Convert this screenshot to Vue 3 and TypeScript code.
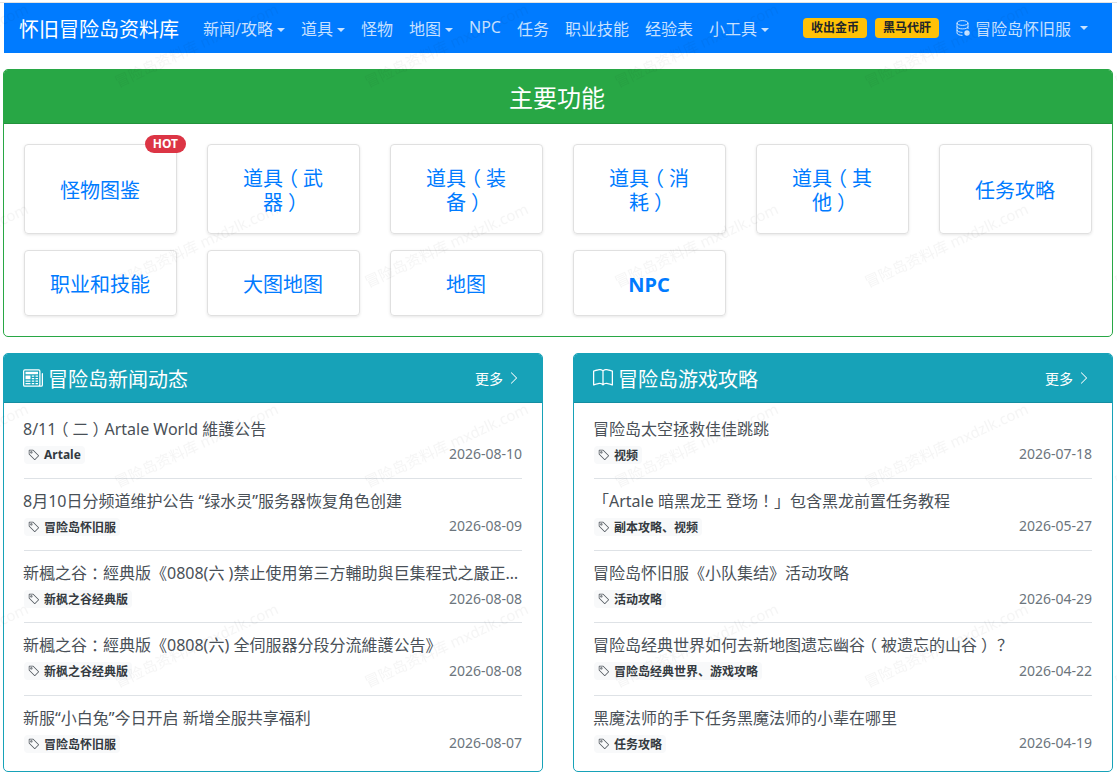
<script setup lang="ts">
type Post = { title: string; tag: string; date: string }

const navItems = [
  { label: '新闻/攻略', caret: true },
  { label: '道具', caret: true },
  { label: '怪物', caret: false },
  { label: '地图', caret: true },
  { label: 'NPC', caret: false },
  { label: '任务', caret: false },
  { label: '职业技能', caret: false },
  { label: '经验表', caret: false },
  { label: '小工具', caret: true },
]

const features = [
  { label: '怪物图鉴', hot: true, tall: true },
  { label: '道具（武器）', tall: true },
  { label: '道具（装备）', tall: true },
  { label: '道具（消耗）', tall: true },
  { label: '道具（其他）', tall: true },
  { label: '任务攻略', tall: true },
  { label: '职业和技能' },
  { label: '大图地图' },
  { label: '地图' },
  { label: 'NPC', bold: true },
]

const news: Post[] = [
  { title: '8/11（二）Artale World 維護公告', tag: 'Artale', date: '2026-08-10' },
  { title: '8月10日分频道维护公告 “绿水灵”服务器恢复角色创建', tag: '冒险岛怀旧服', date: '2026-08-09' },
  { title: '新楓之谷：經典版《0808(六 )禁止使用第三方輔助與巨集程式之嚴正聲明》', tag: '新枫之谷经典版', date: '2026-08-08' },
  { title: '新楓之谷：經典版《0808(六) 全伺服器分段分流維護公告》', tag: '新枫之谷经典版', date: '2026-08-08' },
  { title: '新服“小白兔”今日开启 新增全服共享福利', tag: '冒险岛怀旧服', date: '2026-08-07' },
]

const guides: Post[] = [
  { title: '冒险岛太空拯救佳佳跳跳', tag: '视频', date: '2026-07-18' },
  { title: '「Artale 暗黑龙王 登场！」包含黑龙前置任务教程', tag: '副本攻略、视频', date: '2026-05-27' },
  { title: '冒险岛怀旧服《小队集结》活动攻略', tag: '活动攻略', date: '2026-04-29' },
  { title: '冒险岛经典世界如何去新地图遗忘幽谷（被遗忘的山谷）？', tag: '冒险岛经典世界、游戏攻略', date: '2026-04-22' },
  { title: '黑魔法师的手下任务黑魔法师的小辈在哪里', tag: '任务攻略', date: '2026-04-19' },
]

const panels = [
  { title: '冒险岛新闻动态', icon: 'news', posts: news },
  { title: '冒险岛游戏攻略', icon: 'book', posts: guides },
]

// full-width punctuation sits left/right in the em box here, the reference centres it
function splitPunct(text: string) {
  return text.split(/([（）：！？])/).filter(Boolean).map((t) => ({
    t,
    cls: /[（）：！？]/.test(t) ? 'punct' : '',
  }))
}
</script>

<template>
  <div class="page">
    <div class="top-rule" />
    <nav class="navbar">
      <span class="brand">怀旧冒险岛资料库</span>
      <ul class="nav">
        <li v-for="n in navItems" :key="n.label" class="nav-item">
          {{ n.label }}<i v-if="n.caret" class="caret" />
        </li>
      </ul>
      <span class="pill">收出金币</span>
      <span class="pill">黑马代肝</span>
      <span class="server">
        <svg class="db" viewBox="0 0 14 16" width="14" height="16" fill="none" stroke="currentColor" stroke-width="1">
          <ellipse cx="6.500" cy="3" rx="5.500" ry="2.400" />
          <path d="M1 3v10c0 1.300 2.500 2.400 5.500 2.400M12 3v6M1 6.500c0 1.300 2.500 2.400 5.500 2.400s5.500-1.100 5.500-2.400M1 10c0 1.300 2.500 2.400 5.500 2.400" />
          <circle cx="11" cy="13" r="2.700" fill="currentColor" stroke="none" />
        </svg>
        <span>冒险岛怀旧服</span><i class="caret wide" />
      </span>
    </nav>

    <section class="card green">
      <header class="feature-head">主要功能</header>
      <div class="feature-grid">
        <a
          v-for="f in features"
          :key="f.label"
          class="feature"
          :class="{ tall: f.tall, bold: f.bold }"
        >
          <span class="feature-label"><span v-for="(part, i) in splitPunct(f.label)" :key="i" :class="part.cls">{{ part.t }}</span></span>
          <span v-if="f.hot" class="hot">HOT</span>
        </a>
      </div>
    </section>

    <div class="panels">
      <section v-for="p in panels" :key="p.title" class="card teal">
        <header class="panel-head">
          <svg v-if="p.icon === 'news'" class="head-icon" viewBox="0 0 16 16" width="20" height="20" fill="currentColor">
            <path d="M0 2.500A1.500 1.500 0 0 1 1.500 1h11A1.500 1.500 0 0 1 14 2.500v10.528c0 .3-.05.654-.238.972h.738a.5.5 0 0 0 .5-.5v-9a.5.5 0 0 1 1 0v9a1.500 1.500 0 0 1-1.500 1.500H1.497A1.497 1.497 0 0 1 0 13.500v-11zM12 14c.37 0 .654-.211.853-.441.092-.106.147-.279.147-.531V2.500a.5.5 0 0 0-.5-.5h-11a.5.5 0 0 0-.5.5v11c0 .278.223.5.497.5H12z" />
            <path d="M2 3h10v2H2V3zm0 3h4v3H2V6zm0 4h4v1H2v-1zm0 2h4v1H2v-1zm5-6h2v1H7V6zm3 0h2v1h-2V6zM7 8h2v1H7V8zm3 0h2v1h-2V8zm-3 2h2v1H7v-1zm3 0h2v1h-2v-1zm-3 2h2v1H7v-1zm3 0h2v1h-2v-1z" />
          </svg>
          <svg v-else class="head-icon" viewBox="0 0 16 16" width="20" height="20" fill="currentColor">
            <path d="M1 2.828c.885-.37 2.154-.769 3.388-.893 1.330-.134 2.458.063 3.112.752v9.746c-.935-.53-2.120-.603-3.213-.493-1.180.12-2.370.461-3.287.811V2.828zm7.500-.141c.654-.689 1.782-.886 3.112-.752 1.234.124 2.503.523 3.388.893v9.923c-.918-.35-2.107-.692-3.287-.81-1.094-.111-2.278-.039-3.213.492V2.687zM8 1.783C7.015.936 5.587.81 4.287.94c-1.514.153-3.042.672-3.994 1.105A.5.5 0 0 0 0 2.500v11a.5.5 0 0 0 .707.455c.882-.4 2.303-.881 3.680-1.020 1.409-.142 2.590.087 3.223.877a.5.5 0 0 0 .78 0c.633-.79 1.814-1.019 3.222-.877 1.378.139 2.800.62 3.681 1.020A.5.5 0 0 0 16 13.500v-11a.5.5 0 0 0-.293-.455c-.952-.433-2.480-.952-3.994-1.105C10.413.809 8.985.936 8 1.783z" />
          </svg>
          <span class="panel-title">{{ p.title }}</span>
          <span class="more">
            更多
            <svg viewBox="0 0 16 16" width="14" height="14" fill="currentColor">
              <path d="M4.646 1.646a.5.5 0 0 1 .708 0l6 6a.5.5 0 0 1 0 .708l-6 6a.5.5 0 0 1-.708-.708L10.293 8 4.646 2.354a.5.5 0 0 1 0-.708z" />
            </svg>
          </span>
        </header>
        <ul class="posts">
          <li v-for="post in p.posts" :key="post.title" class="post">
            <div class="post-title"><span v-for="(part, i) in splitPunct(post.title)" :key="i" :class="part.cls">{{ part.t }}</span></div>
            <div class="post-meta">
              <span class="tag">
                <svg viewBox="0 0 16 16" width="12" height="12" fill="#495057">
                  <path d="M6 4.500a1.500 1.500 0 1 1-3 0 1.500 1.500 0 0 1 3 0zm-1 0a.5.5 0 1 0-1 0 .5.5 0 0 0 1 0z" />
                  <path d="M2 1h4.586a1 1 0 0 1 .707.293l7 7a1 1 0 0 1 0 1.414l-4.586 4.586a1 1 0 0 1-1.414 0l-7-7A1 1 0 0 1 1 6.586V2a1 1 0 0 1 1-1zm0 5.586 7 7L13.586 9l-7-7H2v4.586z" />
                </svg>
                {{ post.tag }}
              </span>
              <span class="date">{{ post.date }}</span>
            </div>
          </li>
        </ul>
      </section>
    </div>

    <svg class="watermark" width="1117" height="778" aria-hidden="true">
      <defs>
        <pattern id="wm" width="250" height="200" patternUnits="userSpaceOnUse">
          <text transform="translate(118 88) rotate(-25)" class="wm-text">冒险岛资料库 mxdzlk.com</text>
          <text transform="translate(-132 88) rotate(-25)" class="wm-text">冒险岛资料库 mxdzlk.com</text>
        </pattern>
      </defs>
      <rect width="1117" height="778" fill="url(#wm)" />
    </svg>
  </div>
</template>

<style>
html,
body {
  margin: 0;
  background: #fff;
}
</style>

<style scoped>
.page {
  position: relative;
  box-sizing: border-box;
  height: 778px;
  overflow: hidden;
  padding: 2px 4px 0 3px;
  font-family: "Noto Sans", "Noto Sans CJK SC", sans-serif;
  color: #212529;
}

.top-rule {
  height: 1px;
  margin: 0 -4px 0 -3px;
  background: #e2e2e2;
}

.navbar {
  display: flex;
  align-items: center;
  height: 50px;
  padding: 0 0 0 15px;
  margin: 0 1px 16px 1px;
  background: #007bff;
  color: rgba(255, 255, 255, 0.78);
  font-size: 16px;
}

.brand {
  color: #fff;
  font-size: 20px;
  margin-right: 16px;
  white-space: nowrap;
}

.nav {
  display: flex;
  list-style: none;
  margin: 0;
  padding: 0;
  flex: 1;
}

.nav-item {
  padding: 0 8px;
  white-space: nowrap;
}

.caret {
  display: inline-block;
  margin-left: 4px;
  vertical-align: 3px;
  border-top: 4px solid currentColor;
  border-left: 4px solid transparent;
  border-right: 4px solid transparent;
}

.caret.wide {
  margin-left: 9px;
}

.pill {
  background: #ffc107;
  color: #212529;
  font-size: 12px;
  font-weight: 700;
  line-height: 20px;
  padding: 0 8px;
  border-radius: 4px;
  margin-left: 8px;
}

.server {
  display: flex;
  align-items: center;
  margin: 0 24px 0 17px;
  white-space: nowrap;
}

.db {
  flex: none;
  margin-right: 5px;
}

.card {
  box-sizing: border-box;
  background: #fff;
  border: 1px solid;
  border-radius: 5px;
}

.green {
  border-color: #28a745;
  height: 268px;
}

.feature-head {
  box-sizing: border-box;
  background: #28a745;
  color: #fff;
  text-align: center;
  font-size: 24px;
  line-height: 56px;
  height: 54px;
  padding-right: 2px;
  border-bottom: 1px solid rgba(0, 0, 0, 0.125);
  border-radius: 4px 4px 0 0;
}

.feature-grid {
  display: grid;
  grid-template-columns: repeat(6, 153px);
  column-gap: 30px;
  row-gap: 16px;
  padding: 20px;
}

.feature {
  position: relative;
  box-sizing: border-box;
  display: flex;
  align-items: center;
  justify-content: center;
  height: 66px;
  padding: 3px 25px 0 24px;
  border: 1px solid #e0e0e0;
  border-radius: 4px;
  box-shadow: 0 1px 3px rgba(0, 0, 0, 0.1);
  color: #007bff;
  font-size: 20px;
  line-height: 24px;
  text-align: center;
}

.feature.tall {
  height: 90px;
  padding: 3px 31px 0 30px;
}

.feature.bold {
  font-weight: 700;
}

/* half-width glyph centred in a one em box */
.punct {
  display: inline-block;
  width: 1em;
  text-align: center;
  font-feature-settings: "halt";
}

.hot {
  position: absolute;
  top: -10px;
  right: -10px;
  background: #dc3545;
  color: #fff;
  font-size: 12px;
  font-weight: 700;
  line-height: 18px;
  padding: 0 8px;
  border-radius: 10px;
}

.panels {
  display: grid;
  grid-template-columns: 540px 540px;
  gap: 30px;
  margin-top: 16px;
}

.teal {
  border-color: #17a2b8;
  height: 419px;
}

.panel-head {
  box-sizing: border-box;
  display: flex;
  align-items: center;
  height: 49px;
  padding: 0 21px 0 19px;
  background: #17a2b8;
  color: #fff;
  border-bottom: 1px solid rgba(0, 0, 0, 0.125);
  border-radius: 4px 4px 0 0;
}

.head-icon {
  flex: none;
  margin-right: 5px;
}

.panel-title {
  flex: 1;
  font-size: 20px;
}

.more {
  display: flex;
  align-items: center;
  gap: 4px;
  font-size: 14px;
}

.posts {
  list-style: none;
  margin: 0;
  padding: 3.500px 20px 0;
}

.post {
  box-sizing: border-box;
  height: 72.250px;
  padding-top: 10px;
  border-bottom: 1px solid #dee2e6;
}

.post:last-child {
  border-bottom: none;
}

.post-title {
  margin-left: -1px;
  font-size: 16px;
  line-height: 25px;
  color: #495057;
  white-space: nowrap;
  overflow: hidden;
  text-overflow: ellipsis;
}

.post-meta {
  display: flex;
  align-items: center;
  justify-content: space-between;
  margin-top: 3px;
}

.tag {
  display: inline-flex;
  align-items: center;
  gap: 4px;
  height: 18px;
  margin-top: 1px;
  padding: 0 4px;
  background: #f8f9fa;
  border-radius: 4px;
  font-size: 12px;
  font-weight: 700;
  color: #343a40;
}

.date {
  font-size: 14px;
  line-height: 18px;
  color: #6c757d;
}

.watermark {
  position: absolute;
  left: 0;
  top: 0;
  pointer-events: none;
}

.wm-text {
  font-size: 15px;
  fill: rgba(0, 0, 0, 0.04);
}
</style>
